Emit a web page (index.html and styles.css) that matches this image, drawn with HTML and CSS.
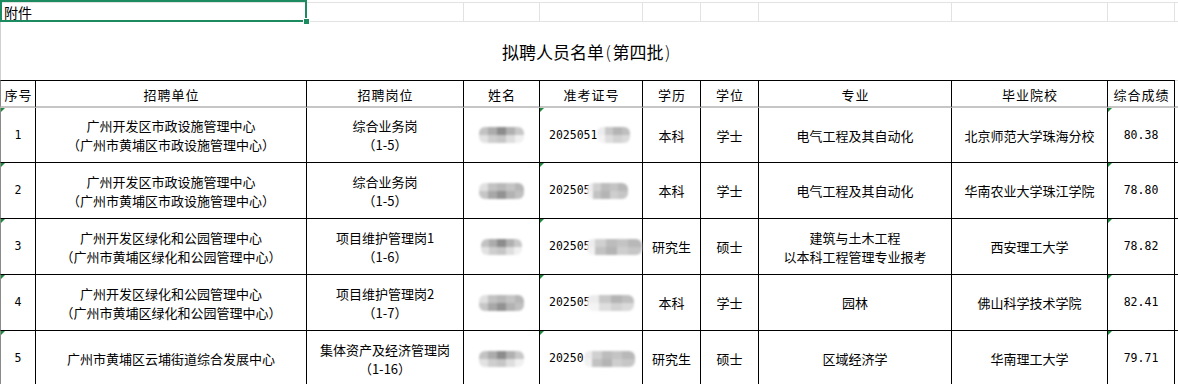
FILE: index.html
```html
<!DOCTYPE html>
<html lang="zh-CN">
<head>
<meta charset="utf-8">
<title>拟聘人员名单(第四批)</title>
<link rel="stylesheet" href="styles.css">
</head>
<body>
<div class="sheet">
  <div class="selection"><span class="handle"></span></div>
  <div class="grid">
    <!-- sheet row 1 -->
    <div class="g g-first g-span2 attach">附件</div>
    <div class="g"></div><div class="g"></div><div class="g"></div><div class="g"></div><div class="g"></div><div class="g"></div><div class="g"></div><div class="g"></div><div class="g g-x"></div>

    <!-- title -->
    <div class="title">拟聘人员名单<span class="hp">(</span>第四批<span class="hp">)</span></div>

    <!-- header -->
    <div class="c hd first">序号</div>
    <div class="c hd">招聘单位</div>
    <div class="c hd">招聘岗位</div>
    <div class="c hd">姓名</div>
    <div class="c hd">准考证号</div>
    <div class="c hd">学历</div>
    <div class="c hd">学位</div>
    <div class="c hd">专业</div>
    <div class="c hd">毕业院校</div>
    <div class="c hd">综合成绩</div>
    <div class="c hd x"></div>

    <!-- row 1 -->
    <div class="c first mark num">1</div>
    <div class="c">广州开发区市政设施管理中心<br>（广州市黄埔区市政设施管理中心）</div>
    <div class="c">综合业务岗<br>（1-5）</div>
    <div class="c"><span class="blob b1"></span></div>
    <div class="c mark id"><span class="num">2025051</span><span class="blob w33 b2"></span></div>
    <div class="c">本科</div>
    <div class="c">学士</div>
    <div class="c">电气工程及其自动化</div>
    <div class="c">北京师范大学珠海分校</div>
    <div class="c mark num">80.38</div>
    <div class="c x"></div>

    <!-- row 2 -->
    <div class="c first mark num">2</div>
    <div class="c">广州开发区市政设施管理中心<br>（广州市黄埔区市政设施管理中心）</div>
    <div class="c">综合业务岗<br>（1-5）</div>
    <div class="c"><span class="blob b3"></span></div>
    <div class="c mark id"><span class="num">202505</span><span class="blob w41 b4 over"></span></div>
    <div class="c">本科</div>
    <div class="c">学士</div>
    <div class="c">电气工程及其自动化</div>
    <div class="c">华南农业大学珠江学院</div>
    <div class="c mark num">78.80</div>
    <div class="c x"></div>

    <!-- row 3 -->
    <div class="c first mark num">3</div>
    <div class="c">广州开发区绿化和公园管理中心<br>（广州市黄埔区绿化和公园管理中心）</div>
    <div class="c">项目维护管理岗1<br>（1-6）</div>
    <div class="c"><span class="blob w41 b1"></span></div>
    <div class="c mark id"><span class="num">202505</span><span class="blob w55 b4 over"></span></div>
    <div class="c">研究生</div>
    <div class="c">硕士</div>
    <div class="c">建筑与土木工程<br>以本科工程管理专业报考</div>
    <div class="c">西安理工大学</div>
    <div class="c mark num">78.82</div>
    <div class="c x"></div>

    <!-- row 4 -->
    <div class="c first mark num">4</div>
    <div class="c">广州开发区绿化和公园管理中心<br>（广州市黄埔区绿化和公园管理中心）</div>
    <div class="c">项目维护管理岗2<br>（1-7）</div>
    <div class="c"><span class="blob b3"></span></div>
    <div class="c mark id"><span class="num">202505</span><span class="blob w47 b2 over"></span></div>
    <div class="c">本科</div>
    <div class="c">学士</div>
    <div class="c">园林</div>
    <div class="c">佛山科学技术学院</div>
    <div class="c mark num">82.41</div>
    <div class="c x"></div>

    <!-- row 5 -->
    <div class="c first mark num">5</div>
    <div class="c">广州市黄埔区云埔街道综合发展中心</div>
    <div class="c">集体资产及经济管理岗<br>（1-16）</div>
    <div class="c"><span class="blob b1"></span></div>
    <div class="c mark id"><span class="num">20250</span><span class="blob w51 b4"></span></div>
    <div class="c">研究生</div>
    <div class="c">硕士</div>
    <div class="c">区域经济学</div>
    <div class="c">华南理工大学</div>
    <div class="c mark num">79.71</div>
    <div class="c x"></div>
  </div>
</div>
</body>
</html>
```

FILE: styles.css
```css
html, body {
  margin: 0;
  padding: 0;
  background: #ffffff;
}

body {
  font-family: "Noto Sans CJK SC", "Noto Sans", sans-serif;
  font-size: 13px;
  color: #000;
  width: 1178px;
  height: 384px;
  overflow: hidden;
}

.sheet {
  position: relative;
  padding-top: 2px;
}

.grid {
  display: grid;
  grid-template-columns: 36px 271px 157px 76px 103px 58px 58px 193px 156px 67px 1fr;
  grid-template-rows: 20px 58px 28px 55px 56px 56px 56px 56px;
}

/* sheet gridline cells (row 1) */
.g {
  box-sizing: border-box;
  border-top: 1px solid #e2e2e2;
  border-bottom: 1px solid #e2e2e2;
  border-right: 1px solid #e2e2e2;
}
.g-first { border-left: 1px solid #d0d0d0; }
.g-span2 { grid-column: span 2; }
.g-x { border-right: none; }

.attach {
  font-size: 14px;
  line-height: 18px;
  padding-left: 3px;
  display: flex;
  align-items: center;
}

.title {
  grid-column: 1 / -1;
  box-sizing: border-box;
  border-left: 1px solid #d0d0d0;
  display: flex;
  align-items: center;
  justify-content: center;
  font-size: 17px;
  padding-right: 5px;
  padding-top: 1px;
}
.hp {
  display: inline-block;
  width: 8.5px;
  text-align: center;
  font-weight: 300;
}

/* table cells */
.c {
  box-sizing: border-box;
  border-right: 1px solid #000;
  border-bottom: 1px solid #000;
  display: flex;
  align-items: center;
  justify-content: center;
  text-align: center;
  line-height: 19px;
  position: relative;
  white-space: nowrap;
}
.first { border-left: 1px solid #8a8a8a; }
.x { border-right: none; }

.hd {
  border-top: 1px solid #000;
  border-bottom: 2px solid #c6c6c6;
  letter-spacing: 1px;
  padding-left: 1px;
  padding-top: 2px;
}
.hd.x { border-top-color: #e2e2e2; }

.num {
  font-family: "DejaVu Sans Mono", "Liberation Mono", monospace;
  font-size: 11.5px;
}

.id {
  justify-content: flex-start;
  padding-left: 9px;
}

/* green error indicator triangle */
.mark::before {
  content: "";
  position: absolute;
  top: 0;
  left: 0;
  border-top: 4px solid #1e8a3c;
  border-right: 4px solid transparent;
}

/* selection rectangle */
.selection {
  position: absolute;
  top: 0;
  left: 0;
  width: 307px;
  height: 22px;
  box-sizing: border-box;
  border: 2px solid #1d8b60;
  z-index: 2;
}
.handle {
  position: absolute;
  right: -5px;
  bottom: -5px;
  width: 5px;
  height: 5px;
  background: #1d8b60;
  border: 1px solid #fff;
}

/* privacy blur blobs */
.blob {
  display: inline-block;
  width: 45px;
  height: 16px;
  border-radius: 6px;
  filter: blur(0.8px);
}
.w33 { width: 33px; }
.w41 { width: 41px; }
.w47 { width: 47px; }
.w51 { width: 51px; }
.w55 { width: 55px; }
.over { margin-left: -4px; }

.b1 {
  background:
    linear-gradient(to right, #c2c2c2 0 20%, #acacac 20% 40%, #8c8c8c 40% 60%, #b0b0b0 60% 80%, #c8c8c8 80% 100%) top / 100% 50% no-repeat,
    linear-gradient(to right, #e2e2e2 0 20%, #cecece 20% 40%, #c6c6c6 40% 60%, #dedede 60% 80%, #f0f0f0 80% 100%) bottom / 100% 50% no-repeat;
}
.b2 {
  background:
    linear-gradient(to right, #ececec 0 25%, #c8c8c8 25% 50%, #b4b4b4 50% 75%, #bfbfbf 75% 100%) top / 100% 50% no-repeat,
    linear-gradient(to right, #f4f4f4 0 25%, #dedede 25% 50%, #d2d2d2 50% 75%, #dadada 75% 100%) bottom / 100% 50% no-repeat;
}
.b3 {
  background:
    linear-gradient(to right, #e0e0e0 0 20%, #c2c2c2 20% 40%, #b8b8b8 40% 60%, #c4c4c4 60% 80%, #b6b6b6 80% 100%) top / 100% 50% no-repeat,
    linear-gradient(to right, #c6c6c6 0 20%, #a8a8a8 20% 40%, #929292 40% 60%, #b2b2b2 60% 80%, #c0c0c0 80% 100%) bottom / 100% 50% no-repeat;
}
.b4 {
  background:
    linear-gradient(to right, #ececec 0 15%, #d0d0d0 15% 35%, #bcbcbc 35% 55%, #c4c4c4 55% 75%, #b8b8b8 75% 100%) top / 100% 50% no-repeat,
    linear-gradient(to right, #f2f2f2 0 15%, #c2c2c2 15% 35%, #b4b4b4 35% 55%, #cecece 55% 75%, #c6c6c6 75% 100%) bottom / 100% 50% no-repeat;
}
```
